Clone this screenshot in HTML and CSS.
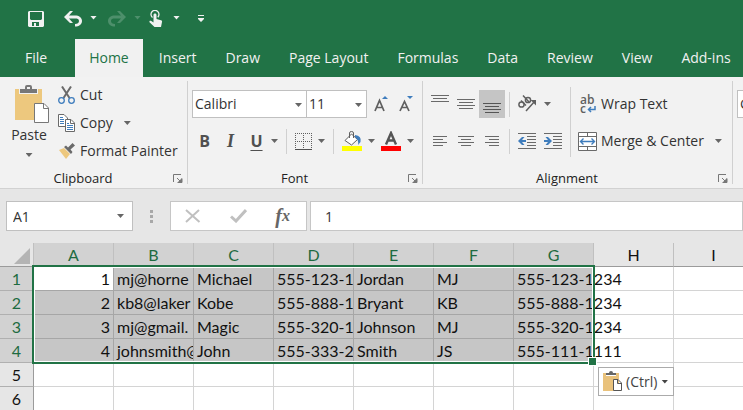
FILE: index.html
```html
<!DOCTYPE html>
<html lang="en">
<head>
<meta charset="utf-8">
<title>Workbook</title>
<link rel="stylesheet" href="styles.css">
</head>
<body>
<header class="titlebar">
  <div class="quick">
    <button class="q-btn" aria-label="Save"><svg width="16" height="16" viewBox="0 0 16 16"><path fill="#f1f1f1" fill-rule="evenodd" d="M1 0H15L16 1V15L15 16H1L0 15V1ZM2 1V8L3 9H13L14 8V1ZM4 11V15H6V12H8V15H11V11Z"/></svg></button>
    <button class="q-btn undo" aria-label="Undo"><svg width="18" height="16" viewBox="0 0 18 16"><path fill="#f1f1f1" d="M0 6 6 0H9L5 4.500H11C15 4.500 18 6.500 18 10C18 13.500 15 15.500 11 15.500V13C13.500 13 15 12 15 10C15 8 13.500 7.500 11 7.500H5L9 12H6Z"/></svg></button>
    <span class="caret light"></span>
    <button class="q-btn redo" aria-label="Redo"><svg width="18" height="16" viewBox="0 0 18 16"><path fill="#4d8f6b" d="M18 6 12 0H9L13 4.500H7C3 4.500 0 6.500 0 10C0 13.500 3 15.500 7 15.500V13C4.500 13 3 12 3 10C3 8 4.500 7.500 7 7.500H13L9 12H12Z"/></svg></button>
    <span class="caret dim"></span>
    <button class="q-btn touch" aria-label="Touch mode"><svg width="16" height="18" viewBox="0 0 16 18"><path fill="none" stroke="#f1f1f1" stroke-width="1.300" d="M3.500 7.500A4 4 0 1 1 8.800 7.200"/><path fill="#f1f1f1" d="M4.500 5C4.500 3 7.500 3 7.500 5V9L12 10.200C13 10.600 13.300 11 13 12L12 17H5.500L0.500 12.200C0 11 1 10.200 2.300 11L4.500 12.500Z"/></svg></button>
    <span class="caret light"></span>
    <button class="q-btn more" aria-label="Customize toolbar"><svg width="6" height="8" viewBox="0 0 6 8"><path fill="#f1f1f1" d="M0 0H6V1H0ZM0 3H6V4L3 7L0 4Z"/></svg></button>
  </div>
  <nav class="tabs">
    <a href="#" class="tab file">File</a>
    <a href="#" class="tab active">Home</a>
    <a href="#" class="tab">Insert</a>
    <a href="#" class="tab">Draw</a>
    <a href="#" class="tab">Page Layout</a>
    <a href="#" class="tab">Formulas</a>
    <a href="#" class="tab">Data</a>
    <a href="#" class="tab">Review</a>
    <a href="#" class="tab">View</a>
    <a href="#" class="tab">Add-ins</a>
  </nav>
</header>

<section class="ribbon">
  <div class="group">
    <div class="tools clip">
      <button class="paste">
        <svg width="36" height="40" viewBox="0 0 36 40"><path fill="#edc87e" d="M1 4H28V35H1Z"/><path fill="#f1f1f1" d="M5 3H24V9H5Z"/><path fill="#777" fill-rule="evenodd" d="M6 4H11V2Q11 0 13 0H16Q18 0 18 2V4H23V8H6ZM13 2V4H16V2Z"/><path fill="#fff" stroke="#777" d="M20.500 18.500H30L34.500 23V37.500H20.500Z"/><path fill="none" stroke="#777" d="M29.500 18.500V23.500H34.500"/></svg>
        <span>Paste</span>
        <span class="caret"></span>
      </button>
      <div class="clip-list">
        <button class="cmd"><svg width="18" height="18" viewBox="0 0 18 18"><path fill="none" stroke="#6a6a6a" stroke-width="2" d="M4 0.500 11.500 12M13 0.500 5.500 12"/><circle cx="3.500" cy="14.500" r="2.800" fill="none" stroke="#3f7dbd" stroke-width="1.300"/><circle cx="13.500" cy="14.500" r="2.800" fill="none" stroke="#3f7dbd" stroke-width="1.300"/></svg>Cut</button>
        <button class="cmd"><svg width="18" height="18" viewBox="0 0 18 18"><path fill="#fff" stroke="#6a6a6a" d="M.5.5H6L9.500 4V12.500H.5Z"/><path stroke="#3f7dbd" d="M2 3.500H5M2 5.500H6M2 7.500H6M2 9.500H6"/><path fill="#fff" stroke="#6a6a6a" d="M7.500 5.500H13L16.500 9V17.500H7.500Z"/><path fill="none" stroke="#6a6a6a" d="M12.500 5.500V9.500H16.500"/><path stroke="#3f7dbd" d="M9 9.500H11M9 11.500H15M9 13.500H15M9 15.500H15"/></svg>Copy<span class="caret"></span></button>
        <button class="cmd"><svg width="18" height="18" viewBox="0 0 18 18"><path fill="#edc87e" d="M1 8 6 6 12 12 8 17Z"/><path fill="#6a6a6a" d="M6 5 8 3.500 10 5.500 14.500 1 17 3.500 12.500 7.500 14.500 10 13 12Z"/></svg>Format Painter</button>
      </div>
    </div>
    <footer class="caption">Clipboard<button class="launch" aria-label="Clipboard settings"><svg width="10" height="10" viewBox="0 0 10 10"><path fill="none" stroke="#777" d="M.5 8V.5H8M4 4 8 8M9 4.500V8.500H5"/><path fill="#777" d="M9 4V9H4Z"/></svg></button></footer>
  </div>

  <div class="group">
    <div class="tools rows">
      <div class="row">
        <label class="pick font-name"><select aria-label="Font"><option>Calibri</option></select><span class="caret"></span></label>
        <label class="pick font-size"><select aria-label="Font size"><option>11</option></select><span class="caret"></span></label>
        <button class="icon grow" aria-label="Increase font size"><svg width="14" height="16" viewBox="0 0 14 16"><path fill="none" stroke="#606060" stroke-width="1.700" d="M1 15 5.500 4.500 10 15M3 11.500H8"/><path fill="#3f7dbd" d="M8 3 11 0 14 3Z"/></svg></button>
        <button class="icon" aria-label="Decrease font size"><svg width="14" height="16" viewBox="0 0 14 16"><path fill="none" stroke="#606060" stroke-width="1.700" d="M1 15 5.500 5.500 10 15M3 11.500H8"/><path fill="#3f7dbd" d="M8 0H14L11 3Z"/></svg></button>
      </div>
      <div class="row marks">
        <button class="icon bold">B</button>
        <button class="icon italic">I</button>
        <button class="icon under">U</button>
        <span class="caret"></span>
        <i class="rule"></i>
        <button class="icon" aria-label="Borders"><svg width="17" height="17" viewBox="0 0 17 17" shape-rendering="crispEdges"><path fill="none" stroke="#606060" stroke-dasharray="1 1" d="M0 .5H17M0 8.500H17M.5 0V16M8.500 0V16M16.500 0V16"/><path stroke="#505050" d="M0 16.500H17"/></svg></button>
        <span class="caret"></span>
        <i class="rule"></i>
        <button class="icon" aria-label="Fill color"><svg width="20" height="20" viewBox="0 0 20 20"><path fill="#ff0" d="M0 15H20V20H0Z"/><path fill="#fff" stroke="#606060" d="M3 9.500 9.500 3 15.500 8.500 9.500 14Z"/><path fill="none" stroke="#606060" d="M7.500 7V2Q7.500.5 9.500.5T11.500 2V7"/><path fill="#3f7dbd" d="M13 4Q20 5 18.500 11L16 14Q17 9 13 6Z"/></svg></button>
        <span class="caret"></span>
        <button class="icon" aria-label="Font color"><svg width="20" height="20" viewBox="0 0 20 20"><path fill="red" d="M0 15H20V20H0Z"/><path fill="none" stroke="#555" stroke-width="2.400" d="M5 13.500 10 2 15 13.500M7 9.500H13"/></svg></button>
        <span class="caret"></span>
      </div>
    </div>
    <footer class="caption">Font<button class="launch" aria-label="Font settings"><svg width="10" height="10" viewBox="0 0 10 10"><path fill="none" stroke="#777" d="M.5 8V.5H8M4 4 8 8M9 4.500V8.500H5"/><path fill="#777" d="M9 4V9H4Z"/></svg></button></footer>
  </div>

  <div class="group">
    <div class="tools align">
      <div class="rows">
        <div class="row">
          <button class="icon wide" aria-label="Top align"><svg width="18" height="18" viewBox="0 0 18 18"><path stroke="#6a6a6a" d="M0 .5H18M2 3.500H16M0 6.500H18"/></svg></button>
          <button class="icon wide" aria-label="Middle align"><svg width="18" height="18" viewBox="0 0 18 18"><path stroke="#6a6a6a" d="M0 4.500H18M2 7.500H16M0 10.500H18M2 13.500H16"/></svg></button>
          <button class="icon wide pressed" aria-label="Bottom align"><svg width="18" height="18" viewBox="0 0 18 18"><path stroke="#555" d="M0 8.500H18M2 11.500H16M0 14.500H18M2 17.500H16"/></svg></button>
          <i class="rule"></i>
          <button class="icon wide" aria-label="Orientation"><svg width="20" height="20" viewBox="0 0 20 20"><g fill="none" stroke="#606060" stroke-width="1.500"><ellipse cx="4.500" cy="10.500" rx="2.600" ry="2.600"/><path d="M4 6.500 9 11.500"/><ellipse cx="11" cy="6" rx="2.600" ry="2.600"/><path d="M6 1.500 12 8M9 17 18 7"/></g><path fill="#606060" d="M13.500 6H19V11.500Z"/></svg></button>
          <span class="caret"></span>
        </div>
        <div class="row">
          <button class="icon wide" aria-label="Align left"><svg width="14" height="10" viewBox="0 0 14 10"><path stroke="#6a6a6a" d="M0 .5H14M0 3.500H10M0 6.500H14M0 9.500H10"/></svg></button>
          <button class="icon wide" aria-label="Center"><svg width="16" height="10" viewBox="0 0 16 10"><path stroke="#6a6a6a" d="M0 .5H16M3 3.500H13M0 6.500H16M3 9.500H13"/></svg></button>
          <button class="icon wide" aria-label="Align right"><svg width="14" height="10" viewBox="0 0 14 10"><path stroke="#6a6a6a" d="M0 .5H14M4 3.500H14M0 6.500H14M4 9.500H14"/></svg></button>
          <i class="rule"></i>
          <button class="icon wide" aria-label="Decrease indent"><svg width="18" height="16" viewBox="0 0 18 16"><path stroke="#6a6a6a" d="M0 .5H18M9 3.500H18M9 6.500H18M9 9.500H18M9 12.500H18M0 15.500H18"/><path fill="#3f7dbd" d="M0 8 4 4H6.500L4 7H8V9H4L6.500 12H4Z"/></svg></button>
          <button class="icon wide" aria-label="Increase indent"><svg width="18" height="16" viewBox="0 0 18 16"><path stroke="#6a6a6a" d="M0 .5H18M9 3.500H18M9 6.500H18M9 9.500H18M9 12.500H18M0 15.500H18"/><path fill="#3f7dbd" d="M8 8 4 4H1.500L4 7H0V9H4L1.500 12H4Z"/></svg></button>
        </div>
      </div>
      <div class="rows wraps">
        <button class="cmd"><span class="abc"><span>ab</span><span>c<svg width="9" height="7" viewBox="0 0 9 7"><path fill="none" stroke="#3f7dbd" stroke-width="1.500" d="M8 0V3.500H2M4 1 1.500 3.500 4 6"/></svg></span></span>Wrap Text</button>
        <button class="cmd"><svg width="19" height="19" viewBox="0 0 19 19"><path fill="#fff" stroke="#6a6a6a" d="M.5.500H18.500V18.500H.5ZM.5 4.500H18.500M.5 14.500H18.500M9.500 .5V4.500M9.500 14.500V18.500"/><path fill="none" stroke="#3f7dbd" stroke-width="1.400" d="M2.500 9.500H16.500M5.500 6.500 2.500 9.500 5.500 12.500M13.500 6.500 16.500 9.500 13.500 12.500"/></svg>Merge &amp; Center<span class="caret"></span></button>
      </div>
    </div>
    <footer class="caption">Alignment<button class="launch" aria-label="Alignment settings"><svg width="10" height="10" viewBox="0 0 10 10"><path fill="none" stroke="#777" d="M.5 8V.5H8M4 4 8 8M9 4.500V8.500H5"/><path fill="#777" d="M9 4V9H4Z"/></svg></button></footer>
  </div>

  <div class="group">
    <div class="tools rows">
      <label class="pick number"><select aria-label="Number format"><option>General</option></select></label>
    </div>
  </div>
</section>

<section class="formula">
  <label class="pick name-box"><input value="A1" aria-label="Name box"><span class="caret"></span></label>
  <svg class="dots" width="3" height="13" viewBox="0 0 3 13"><path fill="#a8a8a8" d="M0 0H3V3H0ZM0 5H3V8H0ZM0 10H3V13H0Z"/></svg>
  <div class="entry">
    <button class="icon" aria-label="Cancel"><svg width="16" height="14" viewBox="0 0 16 14"><path fill="none" stroke="#c0c0c0" stroke-width="2" d="M1 1 14.500 13M14 1 1 13"/></svg></button>
    <button class="icon" aria-label="Enter"><svg width="17" height="14" viewBox="0 0 17 14"><path fill="none" stroke="#c0c0c0" stroke-width="3" d="M1 7.500 6 12 16 1"/></svg></button>
    <button class="icon fx" aria-label="Insert function">f<span>x</span></button>
  </div>
  <input class="value" value="1" aria-label="Formula bar">
</section>

<main class="sheet">
  <table class="cells">
    <colgroup><col class="nums"><col span="9"></colgroup>
    <thead>
      <tr><th class="corner"><svg width="16" height="16" viewBox="0 0 16 16"><path fill="#b4b4b4" d="M16 0V16H0Z"/></svg></th><th class="on">A</th><th class="on">B</th><th class="on">C</th><th class="on">D</th><th class="on">E</th><th class="on">F</th><th class="on">G</th><th>H</th><th>I</th></tr>
    </thead>
    <tbody>
      <tr class="picked"><th class="on">1</th><td class="num current">1</td><td class="cut">mj@horne</td><td>Michael</td><td class="cut">555-123-1</td><td>Jordan</td><td>MJ</td><td>555-123-1234</td><td></td><td></td></tr>
      <tr class="picked"><th class="on">2</th><td class="num">2</td><td class="cut">kb8@laker</td><td>Kobe</td><td class="cut">555-888-1</td><td>Bryant</td><td>KB</td><td>555-888-1234</td><td></td><td></td></tr>
      <tr class="picked"><th class="on">3</th><td class="num">3</td><td class="cut">mj@gmail.</td><td>Magic</td><td class="cut">555-320-1</td><td>Johnson</td><td>MJ</td><td>555-320-1234</td><td></td><td></td></tr>
      <tr class="picked"><th class="on">4</th><td class="num">4</td><td class="cut">johnsmith@</td><td>John</td><td class="cut">555-333-2</td><td>Smith</td><td>JS</td><td>555-111-1111</td><td></td><td></td></tr>
      <tr><th>5</th><td></td><td></td><td></td><td></td><td></td><td></td><td></td><td></td><td></td></tr>
      <tr><th>6</th><td></td><td></td><td></td><td></td><td></td><td></td><td></td><td></td><td></td></tr>
    </tbody>
  </table>
  <div class="selection"></div>
  <button class="paste-options"><svg width="19" height="21" viewBox="0 0 19 21"><path fill="#e9c27c" d="M0 2H16V20H0Z"/><path fill="#fff" d="M3 1H13V5H3Z"/><path fill="#666" d="M3 2H6Q6 0 8 0T10 2H13V4H3Z"/><path fill="#fff" stroke="#555" d="M10.500 8.500H15L18.500 12V19.500H10.500ZM14.500 8.500V12.500H18.500"/></svg>(Ctrl)<span class="caret dark"></span></button>
</main>
</body>
</html>
```

FILE: styles.css
```css
* { box-sizing: border-box; }
body {
  margin: 0;
  min-height: 100vh;
  overflow: hidden;
  display: flex;
  flex-direction: column;
  background: #fff;
  color: #333;
  font: 14px/20px "Open Sans", sans-serif;
}
button, input, select { font: inherit; color: inherit; border: 0; margin: 0; padding: 0; background: none; }
svg { display: block; flex: none; }

.caret {
  flex: none;
  width: 7px;
  height: 4px;
  background: #666;
  clip-path: polygon(0 0, 100% 0, 50% 100%);
}
.caret.light { background: #f1f1f1; }
.caret.dim { background: #4d8f6b; }
.caret.dark { background: #444; }

/* Title bar and tabs */
.titlebar { background: #217346; color: #fff; }
.quick { display: flex; align-items: center; height: 39px; padding: 0 28px; }
.q-btn { display: flex; }
.quick .caret { margin: -4px 0 0 8px; }
.quick svg { margin-top: -2px; }
.undo { margin-left: 20px; }
.redo { margin-left: 11px; }
.touch { margin-left: 8px; }
.more { margin-left: 18px; }
.tabs { display: flex; height: 38px; padding-left: 12px; gap: 3px; }
.tab { padding: 9px 13px 0; color: #f1f1f1; text-decoration: none; white-space: nowrap; }
.file { margin-right: 12px; }
.tab.active { padding: 9px 14px 0; background: #f1f1f1; color: #217346; }

/* Ribbon */
.ribbon {
  display: grid;
  grid-template-columns: 188px 235px 310px 1fr;
  height: 112px;
  overflow: hidden;
  background: #f2f2f2;
  border-bottom: 1px solid #d2d2d2;
}
.group { position: relative; display: flex; flex-direction: column; min-width: 0; white-space: nowrap; }
.group:not(:last-child)::after {
  content: "";
  position: absolute;
  top: 4px;
  right: 0;
  bottom: 4px;
  width: 1px;
  background: #d0d0d0;
}
.tools { flex: 1; }
.caption {
  display: flex;
  justify-content: center;
  align-items: center;
  position: relative;
  height: 20px;
  padding-right: 22px;
  font-size: 13px;
  color: #222;
}
.launch { position: absolute; right: 5px; top: 6px; }
.clip { display: flex; padding: 4px 0 0 10px; }
.paste { display: flex; flex-direction: column; align-items: center; width: 38px; padding-top: 4px; }
.paste svg { margin-left: 6px; }
.paste .caret { margin-top: 8px; }
.paste span:not(.caret) { height: 20px; }
.clip-list { display: flex; flex-direction: column; margin-left: 10px; }
.cmd { display: flex; align-items: center; gap: 4px; height: 28px; }
.cmd .caret { margin-left: 7px; }
.rows { display: flex; flex-direction: column; gap: 9px; padding: 13px 0 0 4px; }
.row { display: flex; align-items: center; height: 28px; }
.icon { display: flex; align-items: center; justify-content: center; height: 28px; }
.pick { display: flex; align-items: center; height: 28px; background: #fff; border: 1px solid #c0c0c0; position: relative; }
.pick select, .pick input { appearance: none; width: 100%; height: 100%; padding-left: 2px; outline: 0; }
.pick .caret { position: absolute; right: 4px; top: 12px; }
.font-name { width: 115px; }
.font-size { width: 60px; border-left: 0; }
.grow { margin: 0 11px 0 7px; }
.rule { width: 1px; height: 25px; background: #d0d0d0; }
.marks { padding-left: 4px; }
.marks .icon { min-width: 17px; }
.marks .caret { margin-left: 6px; }
.marks .rule { margin: 0 8px; }
.marks .caret + .icon { margin-left: 6px; }
.bold { font-weight: 700; font-size: 16px; }
.italic { font: italic 700 18px "Liberation Serif", serif; margin-left: 9px; }
.under { font-weight: 700; font-size: 16px; text-decoration: underline; text-decoration-thickness: 1px; text-underline-offset: 3px; margin-left: 9px; }
.bold, .italic, .under { color: #505050; }

.align { display: flex; }
.wide { width: 26px; }
.pressed { background: #c5c5c5; }
.align .rule { margin: 0 4px; }
.align .row .caret { margin-left: 4px; }
.wraps { position: relative; margin-left: 4px; padding-left: 8px; }
.wraps::before { content: ""; position: absolute; left: 0; top: 10px; width: 1px; height: 70px; background: #d0d0d0; }
.abc { display: flex; flex-direction: column; width: 19px; padding-left: 2px; font-size: 12px; font-weight: 600; line-height: 9px; color: #606060; }
.abc span { display: flex; align-items: flex-end; gap: 1px; text-align: left; }
.number { width: 100px; }

/* Formula bar */
.formula { display: flex; align-items: center; height: 54px; padding-left: 6px; background: #e6e6e6; }
.formula .pick { height: 30px; }
.name-box { width: 127px; }
.name-box input { padding-left: 6px; }
.name-box .caret { right: 8px; }
.dots { margin: 0 17px; }
.entry { display: flex; align-items: center; justify-content: space-between; width: 137px; height: 30px; padding: 0 16px 0 14px; background: #fff; border: 1px solid #c6c6c6; }
.fx { font: italic 700 20px "Liberation Serif", serif; color: #666; }
.fx span { font-size: 16px; }
.value { flex: 1; min-width: 0; height: 30px; margin-left: 3px; padding-left: 14px; background: #fff; border: 1px solid #c6c6c6; }

/* Worksheet */
.sheet { position: relative; flex: 1; overflow: hidden; }
.cells { width: 754px; table-layout: fixed; border-collapse: separate; border-spacing: 0; color: #111; font: 16px/23px Lato, sans-serif; }
.nums { width: 34px; }
.cells th { height: 24px; padding: 0; font-weight: 400; background: #e6e6e6; border-right: 1px solid #c0c0c0; border-bottom: 1px solid #b0b0b0; }
.cells thead th { border-bottom-color: #9b9b9b; }
.cells tbody th { border-right-color: #9b9b9b; }
.cells .on { background: #d2d2d2; color: #1e6b41; }
.corner svg { margin: 2px 0 0 14px; }
.cells td { height: 24px; padding: 0 3px; white-space: nowrap; border-right: 1px solid #d4d4d4; border-bottom: 1px solid #d4d4d4; }
.picked td:nth-child(-n+8) { background: #c6c6c6; border-color: #a6a6a6; }
.picked td.current { background: #fff; }
.cells .cut { overflow: hidden; }
.num { text-align: right; }
.selection { position: absolute; left: 32px; top: 22px; width: 563px; height: 99px; border: 2px solid #217346; box-shadow: inset 0 0 0 1px #fff; pointer-events: none; }
.selection::after { content: ""; position: absolute; right: -4px; bottom: -4px; width: 7px; height: 7px; background: #217346; border: 1px solid #fff; }
.paste-options { position: absolute; left: 598px; top: 124px; display: flex; align-items: center; gap: 4px; width: 76px; height: 29px; padding-left: 4px; background: #fff; border: 1px solid #ababab; color: #444; }
```
